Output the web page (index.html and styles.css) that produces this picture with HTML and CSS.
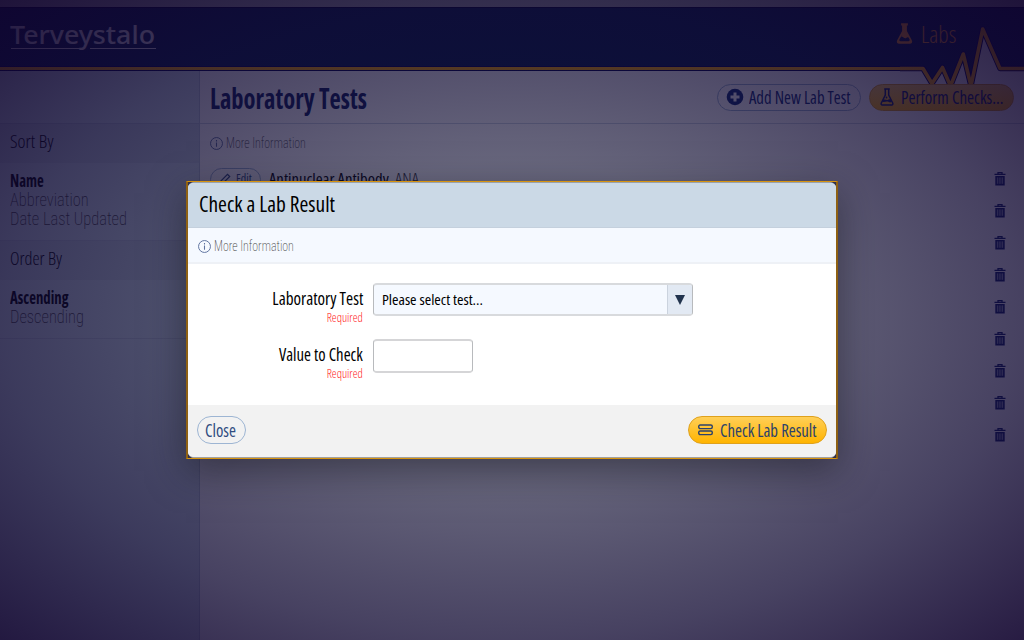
FILE: index.html
```
<!DOCTYPE html>
<html lang="en">
<head>
<meta charset="utf-8">
<title>Laboratory Tests</title>
<link rel="stylesheet" href="styles.css">
</head>
<body>
<svg class="defs" width="0" height="0" aria-hidden="true">
  <symbol id="trash" viewBox="0 0 12 14"><path d="M4 2V.7h4V2M.5 2.300h11" fill="none" stroke="currentColor" stroke-width="1.300"/><path d="M1.300 4h9.400v9.500H1.300z" fill="currentColor"/><path d="M3.400 5.400v6.400M5.200 5.400v6.400M6.900 5.400v6.400M8.600 5.400v6.400" stroke="#fff" stroke-opacity=".7" stroke-width=".8"/></symbol>
  <symbol id="info" viewBox="0 0 12 12"><circle cx="6" cy="6" r="5.500" fill="none" stroke="currentColor" stroke-width=".9"/><path d="M6 5v4M6 2.800v1.300" stroke="currentColor" stroke-width="1"/></symbol>
  <symbol id="flask" viewBox="0 0 16 21"><path d="M4.600.3h6.800v2.200h-1V8l4.900 9.200c1 2-.1 3.500-2 3.500H2.700c-1.900 0-3-1.500-2-3.500L5.600 8V2.500h-1z" fill="currentColor"/><path d="M5.900 11.500 3 16.300c-.5 1-.1 1.900 1 1.900h8c1.100 0 1.500-.9 1-1.900l-1-1.700c-1-.6-1.500-.1-2.300.4-1 .5-2 .2-2.700-.6-.6-.6-1.300-.8-2.200-.4z" fill="var(--liquid)"/></symbol>
</svg>
<div class="page">
  <div class="strip"></div>
  <header class="topbar">
    <div class="logo"><span class="logo-text">Terveystalo</span><i class="rule rule-left"></i><i class="rule rule-right"></i></div>
    <div class="section"><svg class="section-icon" width="17" height="21"><use href="#flask"/></svg><span class="section-name">Labs</span></div>
    <svg class="pulse" width="124" height="64" viewBox="900 24 124 64">
      <path d="M923 66h77v22h-77z" class="pulse-sky"/>
      <path d="M922 69.500H923L932 83.500 942.500 67.500 950.500 86 963.300 54 971 86 982.700 29 1000 69.500V88H922z" class="pulse-bg"/>
      <path d="M899 68.500H923L932 83.500 942.500 67.500 950.500 86 963.300 54 971 86 982.700 29 1000 68.500h25" class="pulse-edge"/>
      <path d="M899 68.500H923L932 83.500 942.500 67.500 950.500 86 963.300 54 971 86 982.700 29 1000 68.500h25" class="pulse-line"/>
    </svg>
  </header>
  <div class="columns">
    <aside class="sidebar">
      <div class="side-head"></div>
      <div class="side-title"><span class="sort-title">Sort By</span></div>
      <div class="side-list"><b>Name</b><span>Abbreviation</span><span>Date Last Updated</span></div>
      <div class="side-title"><span class="order-title">Order By</span></div>
      <div class="side-list side-list-last"><b>Ascending</b><span>Descending</span></div>
    </aside>
    <main class="content">
      <div class="heading">
        <h1>Laboratory Tests</h1>
        <div class="btn btn-add">
          <svg width="18" height="18" viewBox="0 0 18 18"><circle cx="9" cy="9" r="8.300" fill="currentColor"/><path d="M9 4.500v9M4.500 9h9" stroke="#fff" stroke-width="3"/></svg>
          <span>Add New Lab Test</span>
        </div>
        <div class="btn btn-gold btn-perform">
          <svg width="14" height="18" viewBox="0 0 14 18"><path d="M4.200 1h5.600M5.300 1v6L1.300 15c-.5 1 0 1.900 1 1.900h9.400c1 0 1.500-.9 1-1.900L8.700 7V1" fill="none" stroke="currentColor" stroke-width="1.500"/><path d="M3.200 12c2-1.600 3 .8 5-.3 1-.6 1.700-.5 2.300-.1l1 2.200c-1.500 1.300-2.600.3-3.700-.2-1.600-.7-3 .9-5.200.2z" fill="currentColor"/><circle cx="6.500" cy="9.500" r=".9" fill="currentColor"/></svg>
          <span>Perform Checks...</span>
        </div>
      </div>
      <div class="more"><svg width="13" height="13"><use href="#info"/></svg><span>More Information</span></div>
      <div class="rows">
        <div class="row">
          <div class="btn btn-edit"><svg width="12" height="12" viewBox="0 0 12 12"><path d="m1 11 .8-3L8.500 1.300l2.200 2.200L4 10.200z" fill="none" stroke="currentColor" stroke-width="1.200"/></svg><span>Edit</span></div>
          <span class="test-name">Antinuclear Antibody</span><span class="test-abbr">ANA</span>
          <svg class="trash" width="12" height="14"><use href="#trash"/></svg>
        </div>
        <div class="row"><svg class="trash" width="12" height="14"><use href="#trash"/></svg></div>
        <div class="row"><svg class="trash" width="12" height="14"><use href="#trash"/></svg></div>
        <div class="row"><svg class="trash" width="12" height="14"><use href="#trash"/></svg></div>
        <div class="row"><svg class="trash" width="12" height="14"><use href="#trash"/></svg></div>
        <div class="row"><svg class="trash" width="12" height="14"><use href="#trash"/></svg></div>
        <div class="row"><svg class="trash" width="12" height="14"><use href="#trash"/></svg></div>
        <div class="row"><svg class="trash" width="12" height="14"><use href="#trash"/></svg></div>
        <div class="row"><svg class="trash" width="12" height="14"><use href="#trash"/></svg></div>
      </div>
    </main>
  </div>
</div>
<div class="overlay">
  <div class="frame">
    <section class="dialog">
      <div class="dialog-title"><span>Check a Lab Result</span></div>
      <div class="more dialog-more"><svg width="13" height="13"><use href="#info"/></svg><span>More Information</span></div>
      <div class="form">
        <div class="field">
          <div class="label"><span class="label-test">Laboratory Test</span><small>Required</small></div>
          <div class="select"><span>Please select test...</span><div class="arrow"><svg width="10" height="10"><path d="M0 0h10L5 10z" fill="#21334d"/></svg></div></div>
        </div>
        <div class="field">
          <div class="label"><span class="label-value">Value to Check</span><small>Required</small></div>
          <div class="input"></div>
        </div>
      </div>
      <div class="dialog-foot">
        <div class="btn btn-close"><span>Close</span></div>
        <div class="btn btn-gold btn-check">
          <svg width="15" height="12" viewBox="0 0 15 12"><rect x=".7" y="1" width="13.600" height="3.600" rx="1.500" fill="none" stroke="currentColor" stroke-width="1.400"/><rect x=".7" y="7" width="13.600" height="3.600" rx="1.500" fill="none" stroke="currentColor" stroke-width="1.400"/></svg>
          <span>Check Lab Result</span>
        </div>
      </div>
    </section>
  </div>
</div>
</body>
</html>
```
FILE: styles.css
```
* { box-sizing: border-box; }
body {
  margin: 0;
  width: 1024px;
  height: 640px;
  overflow: hidden;
  position: relative;
  font-family: "Open Sans", "Liberation Sans", sans-serif;
  font-stretch: 75%;
  background: #fff;
  color: #000;
}
span, b, small, h1 { display: inline-block; white-space: nowrap; transform-origin: left center; }
svg { display: block; flex: none; }
.defs { position: absolute; }

.page { height: 640px; display: flex; flex-direction: column; }
.strip { height: 7px; background: #a8a8a8; flex: none; }
.topbar {
  position: relative;
  height: 64px;
  flex: none;
  display: flex;
  justify-content: space-between;
  background: #061e4c;
  border-bottom: 1px solid #00004d;
  box-shadow: inset 0 -3px #ffae00, inset 0 -4px #00004d, inset 0 1px #000030;
}
.logo { width: 146px; height: 43px; margin-left: 10px; position: relative; }
.logo-text {
  font: 500 25px/34px "Noto Sans", sans-serif;
  color: #e4e4ea;
  margin-top: 10px;
  transform: scaleX(1.070);
}
.rule { position: absolute; top: 41px; height: 1px; background: #e4e4ea; }
.rule-left { left: 1px; width: 70px; }
.rule-right { left: 80px; width: 66px; }
.section { position: relative; z-index: 1; display: flex; padding: 16px 67px 0 0; color: #ff9c20; --liquid: #061e4c; }
.section-icon { margin-right: 8px; }
.section-name { font-weight: 300; font-size: 24.500px; line-height: 22px; width: 36px; transform: scaleX(.960); }
.pulse { position: absolute; right: 0; top: 17px; }
.pulse-bg { fill: #fff; }
.pulse-sky { fill: #061e4c; }
.pulse-edge { fill: none; stroke: #00004d; stroke-width: 5.500; stroke-linejoin: round; }
.pulse-line { fill: none; stroke: #ffae00; stroke-width: 3.600; stroke-linejoin: round; }

.columns { flex: 1; display: flex; }
.sidebar { width: 200px; background: #cfe0ea; border-right: 1px solid #b4c4d4; }
.side-head { height: 53px; border-bottom: 1px solid #b4c4d4; }
.side-title { height: 39px; background: #c4d4df; padding: 4px 10px; font-weight: 300; font-size: 19px; line-height: 26px; color: #000; }
.order-title { transform: scaleX(.950); }
.side-list { height: 78px; padding: 8px 10px; display: flex; flex-direction: column; align-items: flex-start; line-height: 19px; border-bottom: 1px solid #bccada; }
.side-list-last { height: 59px; }
.side-list b { font-size: 18px; transform: scaleX(.820); }
.side-list span { font-family: Roboto, sans-serif; font-weight: 200; font-size: 19px; color: #444; transform: scaleX(.863); }

.content { flex: 1; }
.heading { height: 53px; border-bottom: 1px solid #cbd5e2; padding: 0 10px; display: flex; align-items: center; }
h1 { margin: 0 auto 0 0; width: 160px; font-size: 29px; line-height: 40px; color: #101f60; transform: scaleX(.846); padding-top: 1px; }
.btn { display: flex; align-items: center; height: 27px; border: 1px solid #9db5d3; border-radius: 14px; font-size: 18.500px; line-height: 25px; color: #304c80; }
.btn > span { margin-top: -2px; }
.btn-gold { background: linear-gradient(#ffcf57, #ffb400); border-color: #dfa11c; position: relative; }
.btn-add { width: 144px; padding-left: 8px; gap: 5px; color: #102c78; margin-right: 8px; }
.btn-add span { transform: scaleX(.900); }
.btn-perform { width: 145px; padding-left: 10px; gap: 7px; color: #10206c; }
.btn-perform span { transform: scaleX(.918); }
.more { height: 39px; display: flex; align-items: center; padding-left: 10px; gap: 3px; color: #5f739f; }
.more span { font-family: Roboto, sans-serif; font-weight: 200; font-size: 14.500px; color: #444; transform: scaleX(.820); }
.rows { padding: 0 18px 0 10px; }
.row { height: 32px; display: flex; align-items: center; color: #10206c; }
.trash { margin-left: auto; }
.btn-edit { width: 51px; height: 23px; font-size: 12px; padding-left: 8px; gap: 5px; }
.test-name { width: 126px; margin: -1px 0 0 8px; font-weight: 500; font-size: 17px; color: #000; transform: scaleX(.980); }
.test-abbr { margin-top: -1px; font-weight: 300; font-size: 17px; color: #333; transform: scaleX(1.050); }

.overlay {
  position: absolute;
  z-index: 5;
  inset: 0;
  display: flex;
  align-items: center;
  justify-content: center;
  background: radial-gradient(ellipse farthest-corner at center, rgba(14, 12, 48, .60) 0%, rgba(14, 12, 48, .63) 35%, rgba(16, 9, 50, .77) 70%, rgba(16, 3, 46, .90) 100%);
}
.frame {
  width: 652px;
  height: 278px;
  border: solid #d8940f;
  border-width: 1px 2px;
  border-left-color: #8f6113;
  border-right-color: #8f6113;
  background: #30304a;
  box-shadow: 0 12px 35px rgba(20, 20, 30, .5);
}
.dialog { height: 276px; border-radius: 6px; overflow: hidden; display: flex; flex-direction: column; background: #fff; border-top: 1px solid #98a1ad; border-bottom: 1px solid #a0a0a0; }
.dialog-title { height: 45px; flex: none; background: #cbd9e6; border-bottom: 1px solid #c4d0dd; padding-left: 11px; font-size: 22px; line-height: 40px; font-weight: 500; }
.dialog-title span { transform: scaleX(.972); }
.dialog-more { height: 36px; flex: none; background: #f5f9ff; border-bottom: 2px solid #eef1f6; padding-top: 2px; }
.form { flex: 1; padding-top: 19px; }
.field { display: flex; height: 56px; gap: 10px; }
.label { width: 175px; display: flex; flex-direction: column; align-items: flex-end; }
.label span { font-size: 18.500px; font-weight: 500; line-height: 25px; margin: 2px 0 1px; transform-origin: right center; }
.label-test { transform: scaleX(.925); }
.label-value { transform: scaleX(.904); }
.label small { font-size: 13px; line-height: 13px; color: #ff2020; font-weight: 350; transform: scaleX(.930); transform-origin: right center; }
.select { width: 320px; height: 33px; display: flex; justify-content: space-between; border: 1px solid #bdbfc2; border-width: 2px 1px; border-color: #d8dadd #b8babd; border-radius: 4px; background: #f5f9ff; padding-left: 8px; font-size: 15px; line-height: 28px; overflow: hidden; }
.select span { transform: scaleX(1.040); }
.arrow { width: 25px; display: flex; align-items: center; justify-content: center; background: #e2e9f3; border-left: 1px solid #cbd3de; }
.input { width: 100px; height: 34px; border: 1px solid #b8babd; border-width: 2px 1px; border-color: #d5d5d7 #b8babd; border-radius: 4px; }
.dialog-foot { height: 52px; flex: none; background: #f2f2f2; display: flex; justify-content: space-between; align-items: flex-start; padding: 11px 9px 0; }
.dialog-foot .btn { height: 28px; }
.dialog-foot .btn > span { margin-top: -1px; }
.btn-close { width: 49px; padding-left: 7px; }
.btn-close span { transform: scaleX(.910); }
.btn-check { width: 139px; padding-left: 9px; gap: 7px; color: #2c426b; }
.btn-check span { transform: scaleX(.906); }
```
